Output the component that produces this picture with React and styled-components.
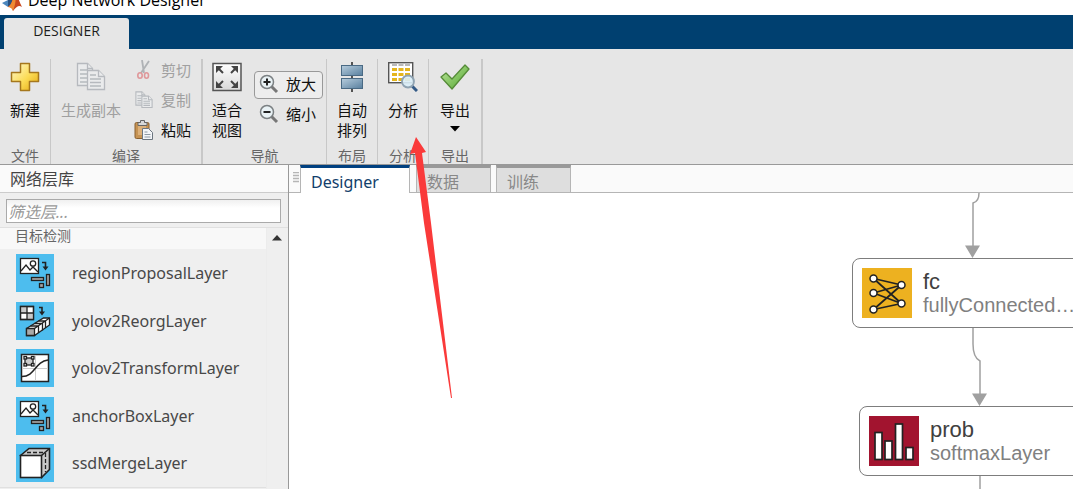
import React from "react";
import styled, { createGlobalStyle } from "styled-components";

const GlobalStyle = createGlobalStyle`
  *, *::before, *::after { box-sizing: border-box; }
  html, body, #root { height: 100%; }
  body {
    margin: 0;
    overflow: hidden;
    background: #fff;
    font-family: "Noto Sans", "Noto Sans CJK SC", sans-serif;
  }
  button, input { font: inherit; margin: 0; }
`;

const Window = styled.div`
  position: relative;
  display: flex;
  flex-direction: column;
  height: 100%;
  overflow: hidden;
`;

const TitleBar = styled.header`
  display: flex;
  align-items: flex-end;
  gap: 6px;
  height: 15px;
  padding: 0 2px 4px;
  flex: none;
  overflow: hidden;
  font-family: "Open Sans", sans-serif;
  font-size: 16px;
  line-height: 22px;
  color: #000;
`;

const TabStrip = styled.nav`
  display: flex;
  align-items: flex-end;
  height: 34px;
  padding-left: 4px;
  flex: none;
  background: #004070;
`;

const RibbonTab = styled.button`
  width: 125px;
  height: 31px;
  border: 0;
  border-radius: 3px 3px 0 0;
  padding: 0 0 6px;
  background: #e6e6e6;
  color: #1c1c1c;
  font-family: "Open Sans", sans-serif;
  font-size: 14px;
`;

const Ribbon = styled.div`
  display: flex;
  height: 116px;
  flex: none;
  padding-top: 10px;
  background: #e6e6e6;
  border-bottom: 1px solid #999;
`;

const Group = styled.section`
  display: flex;
  flex-direction: column;
  width: ${(p) => p.$width}px;
  border-right: ${(p) => (p.$end ? 2 : 1)}px solid #c8c8c8;
`;

const GroupTools = styled.div`
  display: flex;
  justify-content: center;
  align-items: flex-start;
  gap: ${(p) => p.$gap || 0}px;
  height: 89px;
  padding-left: ${(p) => p.$inset || 0}px;
`;

const GroupName = styled.div`
  font-size: 14px;
  line-height: 16px;
  text-align: center;
  color: #666;
`;

const BigTool = styled.button`
  display: flex;
  flex-direction: column;
  align-items: center;
  flex: none;
  border: 0;
  padding: 3px 0 0;
  background: none;
  font-size: 15px;
  line-height: 20px;
  color: #111;
  &:disabled { color: #a0a0a0; }
  & > svg:first-child { margin-bottom: 8px; }
  & > svg:last-child { margin-top: 6px; }
`;

const SmallTools = styled.div`
  display: flex;
  flex-direction: column;
  flex: none;
  margin-top: ${(p) => p.$top}px;
`;

const SmallTool = styled.button`
  display: flex;
  align-items: center;
  gap: 8px;
  height: 30px;
  border: 0;
  padding: 0 0 1px;
  background: none;
  font-size: 15px;
  line-height: 20px;
  color: #111;
  &:disabled { color: #a0a0a0; }
`;

const ZoomTool = styled(SmallTool)`
  gap: 7px;
  height: 28px;
  margin-bottom: 2px;
  border: 1px solid ${(p) => (p.$active ? "#999" : "transparent")};
  border-radius: 4px;
  padding: 0 6px 2px 4px;
  background: ${(p) => (p.$active ? "#ededed" : "none")};
`;

const IconSlot = styled.span`
  display: flex;
  justify-content: center;
  width: 19px;
`;

const Body = styled.main`
  display: flex;
  flex: 1;
  min-height: 0;
`;

const Library = styled.aside`
  display: flex;
  flex-direction: column;
  width: 289px;
  flex: none;
  border-right: 1px solid #999;
  background: #efefef;
`;

const LibraryTitle = styled.h2`
  margin: 0;
  height: 28px;
  padding: 1px 0 0 10px;
  border-bottom: 1px solid #ccc;
  background: #fafafa;
  font-size: 16px;
  font-weight: 400;
  line-height: 26px;
  color: #444;
`;

const SearchRow = styled.div`
  height: 35px;
  padding: 6px 7px 0 6px;
  border-bottom: 1px solid #e0e0e0;
`;

const Search = styled.input`
  display: block;
  width: 100%;
  height: 24px;
  border: 1px solid #aaa;
  padding: 1px 1px 0;
  background: linear-gradient(#f0f0f0, #fff 8px);
  font-size: 16px;
  font-style: italic;
  &::placeholder { color: #999; opacity: 1; }
`;

const LibraryScroll = styled.div`
  display: flex;
  flex: 1;
`;

const LibraryContent = styled.div`
  flex: 1;
  border-right: 1px solid #ececec;
`;

const ScrollTrack = styled.div`
  width: 21px;
  padding: 7px 0 0 5px;
  svg { display: block; }
`;

const Category = styled.h3`
  margin: 0;
  height: 21px;
  padding-left: 15px;
  background: #f8f8f8;
  font-size: 14px;
  font-weight: 400;
  line-height: 16px;
  color: #666;
`;

const LayerList = styled.ul`
  display: flex;
  flex-direction: column;
  justify-content: space-between;
  height: 239px;
  margin: 0;
  padding: 5px 0 5px 16px;
  border-bottom: 1px solid #e0e0e0;
  list-style: none;
`;

const LayerItem = styled.li`
  display: flex;
  align-items: center;
  gap: 18px;
  font-size: 16px;
  line-height: 22px;
  color: #484848;
`;

const Workspace = styled.section`
  display: flex;
  flex-direction: column;
  flex: 1;
  min-width: 0;
`;

const DocTabs = styled.div`
  display: flex;
  height: 28px;
  flex: none;
  background: #fafafa;
`;

const Filler = styled.div`
  width: ${(p) => (p.$width ? `${p.$width}px` : "auto")};
  flex: ${(p) => (p.$width ? "none" : 1)};
  padding: 7px 0 0 4px;
  border-bottom: 1px solid #b5b5b5;
  svg { display: block; }
`;

const DocTab = styled.button`
  width: ${(p) => (p.$active ? 110 : 75)}px;
  border: 1px solid #b5b5b5;
  border-top: 3px solid ${(p) => (p.$active ? "#004080" : "#999")};
  border-bottom-width: ${(p) => (p.$active ? 0 : 1)}px;
  padding: 3px 0 0 10px;
  background: ${(p) => (p.$active ? "#fff" : "#dedede")};
  color: ${(p) => (p.$active ? "#123e6b" : "#888")};
  font-size: 16px;
  line-height: 20px;
  text-align: left;
`;

const Canvas = styled.div`
  position: relative;
  flex: 1;
  overflow: hidden;
  background: #fff;
`;

const Links = styled.svg`
  position: absolute;
  left: 0;
  top: 0;
`;

const Node = styled.article`
  position: absolute;
  left: ${(p) => p.$x}px;
  top: ${(p) => p.$y}px;
  display: flex;
  align-items: center;
  gap: 11px;
  width: 242px;
  height: 70px;
  padding: 0 9px;
  border: 1px solid #7d7d7d;
  border-radius: 8px;
  background: #fff;
  font-family: "Liberation Sans", sans-serif;
  white-space: nowrap;
  svg { flex: none; }
`;

const NodeName = styled.div`
  font-size: 22px;
  line-height: 24px;
  color: #404040;
`;

const NodeType = styled.div`
  font-size: 20px;
  line-height: 22px;
  color: #808080;
`;

const Pointer = styled.svg`
  position: absolute;
  left: 409px;
  top: 136px;
  pointer-events: none;
`;

const Logo = () => (
  <svg width="20" height="18" viewBox="0 0 20 18">
    <path d="M0 10 6 7 10 11 6 14Z" fill="#4b86bd" />
    <path d="M6 7C9 6 10 1 13 0L10 12 6 14Z" fill="#29517f" />
    <path d="M13 0c3 2 4 9 7 14-3-2-5-1-9 4-1-3-2-4-5-4 4-2 5-10 7-14Z" fill="#c9471e" />
    <path d="M13 0c1 5 1 10-2 18-1-3-2-4-5-4 4-2 5-10 7-14Z" fill="#ef8a32" />
  </svg>
);

const PlusIcon = () => (
  <svg width="30" height="30" viewBox="0 0 30 30">
    <defs>
      <linearGradient id="gold" x1="0" y1="0" x2="1" y2="1">
        <stop offset="0" stopColor="#fff9cf" />
        <stop offset="0.55" stopColor="#fbdb55" />
        <stop offset="1" stopColor="#e2a60c" />
      </linearGradient>
    </defs>
    <path d="M10.500 1.500h9v9h9v9h-9v9h-9v-9h-9v-9h9Z" fill="url(#gold)" stroke="#a5771d" strokeWidth="1.500" strokeLinejoin="round" />
  </svg>
);

const CopyPages = ({ size = 30 }) => (
  <svg width={size} height={size} viewBox="0 0 30 30" opacity="0.55">
    <g fill="#eef0f2" stroke="#8f969e" strokeWidth={size < 30 ? 1.8 : 1.3}>
      <path d="M1.500 1.500h10l5 5v17h-15Z" />
      <path d="M11.500 1.500v5h5M4 8h8M4 12h7M4 16h7M4 20h7" />
      <path d="M11.500 8.500h11l6 6v13h-17Z" />
      <path d="M22.500 8.500v6h6M14 13h6M14 17h11M14 20.500h11M14 24h11" />
    </g>
  </svg>
);

const ScissorsIcon = () => (
  <svg width="17" height="20" viewBox="0 0 17 20" fill="none" opacity="0.6">
    <path d="M7 0 9 13M14 1 6 13" stroke="#8b9096" strokeWidth="1.800" />
    <ellipse cx="5" cy="15.500" rx="2.200" ry="2.800" stroke="#dc6468" strokeWidth="1.600" />
    <ellipse cx="11.500" cy="15.500" rx="2" ry="2.800" stroke="#dc6468" strokeWidth="1.600" />
  </svg>
);

const PasteIcon = () => (
  <svg width="19" height="20" viewBox="0 0 19 20">
    <rect x="1" y="2.500" width="14" height="16" rx="1.500" fill="#c69353" stroke="#8a6030" />
    <rect x="4" y="4" width="8" height="11" fill="#dcb079" />
    <path d="M4 2.500h2.500V.5h4v2h2.500v3H4Z" fill="#d8d8d8" stroke="#666" />
    <path d="M8.500 8.500h6l4 4v7h-10Z" fill="#f3f5f8" stroke="#6c7680" />
    <path d="M10.500 12h3M10.500 14.500h6M10.500 17h6" stroke="#8d98a3" />
  </svg>
);

const FitIcon = () => (
  <svg width="30" height="30" viewBox="0 0 30 30">
    <defs>
      <linearGradient id="silver" x1="0" y1="0" x2="0" y2="1">
        <stop offset="0" stopColor="#fff" />
        <stop offset="1" stopColor="#d8d8d8" />
      </linearGradient>
    </defs>
    <rect x="1" y="1.500" width="28" height="27" fill="url(#silver)" stroke="#555" strokeWidth="1.500" />
    <g fill="#444" stroke="#444" strokeWidth="2">
      <path d="m6 6 5 5M24 6l-5 5M6 24l5-5M24 24l-5-5" />
      <path d="M4 4h7l-7 7ZM26 4h-7l7 7ZM4 26h7l-7-7ZM26 26h-7l7-7Z" stroke="none" />
    </g>
  </svg>
);

const ZoomIcon = ({ plus }) => (
  <svg width="20" height="20" viewBox="0 0 20 20">
    <path d="m12 12 6 6" stroke="#777" strokeWidth="3" />
    <circle cx="8" cy="8" r="6.500" fill="#e9f2f5" stroke="#7b8083" strokeWidth="1.500" />
    <path d={plus ? "M4.500 8h7M8 4.500v7" : "M4.500 8h7"} stroke="#222" strokeWidth="2" />
  </svg>
);

const ArrangeIcon = () => (
  <svg width="24" height="30" viewBox="0 0 24 30">
    <defs>
      <linearGradient id="steel" x1="0" y1="0" x2="1" y2="1">
        <stop offset="0" stopColor="#b7cddd" />
        <stop offset="1" stopColor="#587f9e" />
      </linearGradient>
    </defs>
    <path d="M12 0v30" stroke="#222" strokeWidth="1.500" />
    <rect x="1.500" y="3.500" width="21" height="10" fill="url(#steel)" stroke="#4a6a84" />
    <rect x="1.500" y="16.500" width="21" height="10" fill="url(#steel)" stroke="#4a6a84" />
  </svg>
);

const AnalyzeIcon = () => (
  <svg width="30" height="30" viewBox="0 0 30 30">
    <rect x="0.700" y="0.700" width="24" height="20" fill="#fff" stroke="#555" strokeWidth="1.400" />
    {[2, 6, 11, 16].map((y, row) =>
      [4, 10.500, 17].map((x) => (
        <rect key={`${x}-${y}`} x={x} y={y} width="5" height={row === 0 ? 2 : 3} fill={row === 0 ? "#b8b8b8" : "#e4b51e"} />
      ))
    )}
    <path d="m24 24 5 5" stroke="#345b87" strokeWidth="3" />
    <circle cx="20" cy="19.500" r="6" fill="#d9edf7" fillOpacity="0.900" stroke="#8fa3b2" strokeWidth="1.800" />
  </svg>
);

const CheckIcon = () => (
  <svg width="30" height="30" viewBox="0 0 30 30">
    <defs>
      <linearGradient id="leaf" x1="0" y1="0" x2="1" y2="1">
        <stop offset="0" stopColor="#c2e8a1" />
        <stop offset="1" stopColor="#4ea52b" />
      </linearGradient>
    </defs>
    <path d="m1 15 5-4 6 6L25 3l4 4-17 20Z" fill="url(#leaf)" stroke="#558b38" strokeWidth="1.300" strokeLinejoin="round" />
  </svg>
);

const Caret = ({ up }) => (
  <svg width="10" height="6" viewBox="0 0 10 6">
    <path d={up ? "M0 5.500h10L5 0Z" : "M0 0h10L5 5.500Z"} fill={up ? "#333" : "#000"} />
  </svg>
);

const Grip = () => (
  <svg width="6" height="12" viewBox="0 0 6 12">
    <path d="M0 .5h6M0 3.500h6M0 6.500h6M0 9.500h6" stroke="#b5b5b5" strokeWidth="1.500" />
  </svg>
);

const Tile = ({ children }) => (
  <svg width="38" height="38" viewBox="0 0 38 38">
    <rect width="38" height="38" fill="#4dbdee" />
    <g fill="none" stroke="#222" strokeWidth="1.300">{children}</g>
  </svg>
);

const RegionIcon = () => (
  <Tile>
    <rect x="4.500" y="4.500" width="18" height="15" fill="#fff" />
    <path d="m5 17 5-6 4 5 3-3 5 5" />
    <circle cx="17" cy="9.500" r="2.700" />
    <path d="M26 8.500h3.500V14" strokeWidth="1.600" />
    <path d="M26.500 12.500h6l-3 4Z" fill="#222" stroke="none" />
    <g fill="#a5a5a5">
      <rect x="15.500" y="23.500" width="12" height="3" />
      <rect x="30.500" y="20.500" width="3" height="11" />
      <rect x="23.500" y="29.500" width="4" height="4" />
    </g>
  </Tile>
);

const ReorgIcon = () => (
  <Tile>
    <rect x="4.500" y="4.500" width="13" height="13" fill="#fff" />
    <path d="M5 5h6v6H5ZM11 11h6v6h-6Z" fill="#c9c9c9" stroke="none" />
    <path d="M4.500 11h13M11 4.500v13M4.500 4.500h13v13h-13Z" />
    <path d="M23 5.500h3V11" strokeWidth="1.600" />
    <path d="M23 9.500h6l-3 4Z" fill="#222" stroke="none" />
    <path d="m10.500 26.500 17-10.500h6v7l-15 10.500h-8Z" fill="#fff" />
    <path d="M10.500 26.500h8v7h-8Z" fill="#aaa" />
    <path d="m18.500 26.500 15-10.500M14.500 24h8v7M18.500 21.500h8v7M22.500 19h7v7" />
  </Tile>
);

const TransformIcon = () => (
  <Tile>
    <rect x="5.500" y="5.500" width="27" height="27" fill="#fff" strokeWidth="1.500" />
    <path d="M19.500 6v26M6 19.500h26" stroke="#ccc" strokeWidth="1" />
    <path d="M6 27.500c13 0 13-15 26-16.500" strokeWidth="1.500" />
    <rect x="9" y="9" width="8" height="7" fill="#ccc" />
    <g fill="#fff">
      <rect x="8" y="7.500" width="2.500" height="2.500" />
      <rect x="15.500" y="7.500" width="2.500" height="2.500" />
      <rect x="8" y="14.500" width="2.500" height="2.500" />
      <rect x="15.500" y="14.500" width="2.500" height="2.500" />
    </g>
  </Tile>
);

const MergeIcon = () => (
  <Tile>
    <path d="M4.500 11.500 13 4.500h20.500v21l-8 8Z" fill="#c9c9c9" strokeWidth="1.600" />
    <rect x="4.500" y="11.500" width="21" height="22" fill="#fff" strokeWidth="1.600" />
    <path d="m25.500 11.500 8-7" strokeWidth="1.600" />
    <path d="M11 8.500h17M29.500 9v19" strokeDasharray="4 2" />
  </Tile>
);

const FullyConnectedIcon = () => (
  <svg width="50" height="50" viewBox="0 0 50 50">
    <rect width="50" height="50" fill="#edb120" />
    <path d="M11.500 10.500 39.500 17M11.500 10.500 39.500 35.500M11.500 25 39.500 17M11.500 25 39.500 35.500M11.500 41.500 39.500 17M11.500 41.500 39.500 35.500" stroke="#222" strokeWidth="1.700" />
    <g fill="#fff" stroke="#222" strokeWidth="1.500">
      <circle cx="11.500" cy="10.500" r="3.500" />
      <circle cx="11.500" cy="25" r="3.500" />
      <circle cx="11.500" cy="41.500" r="3.500" />
      <circle cx="39.500" cy="17" r="3.500" />
      <circle cx="39.500" cy="35.500" r="3.500" />
    </g>
  </svg>
);

const SoftmaxIcon = () => (
  <svg width="50" height="50" viewBox="0 0 50 50">
    <rect width="50" height="50" fill="#a2142f" />
    <g fill="#fff" stroke="#222" strokeWidth="1.700">
      <rect x="6" y="16.500" width="7" height="27" />
      <rect x="16" y="25" width="7" height="18.500" />
      <rect x="26.500" y="8" width="7" height="35.500" />
      <rect x="37" y="31.500" width="7" height="12" />
    </g>
  </svg>
);

const layers = [
  ["regionProposalLayer", RegionIcon],
  ["yolov2ReorgLayer", ReorgIcon],
  ["yolov2TransformLayer", TransformIcon],
  ["anchorBoxLayer", RegionIcon],
  ["ssdMergeLayer", MergeIcon],
];

const nodes = [
  { x: 563, y: 65, name: "fc", type: "fullyConnected…", Icon: FullyConnectedIcon },
  { x: 570, y: 213, name: "prob", type: "softmaxLayer", Icon: SoftmaxIcon },
];

export default function App() {
  return (
    <Window>
      <GlobalStyle />
      <TitleBar><Logo /><span>Deep Network Designer</span></TitleBar>
      <TabStrip><RibbonTab>DESIGNER</RibbonTab></TabStrip>
      <Ribbon>
        <Group $width={51}>
          <GroupTools><BigTool><PlusIcon /><span>新建</span></BigTool></GroupTools>
          <GroupName>文件</GroupName>
        </Group>
        <Group $width={152} $end>
          <GroupTools $gap={13}>
            <BigTool disabled><CopyPages /><span>生成副本</span></BigTool>
            <SmallTools $top={-4}>
              <SmallTool disabled><IconSlot><ScissorsIcon /></IconSlot>剪切</SmallTool>
              <SmallTool disabled><IconSlot><CopyPages size={18} /></IconSlot>复制</SmallTool>
              <SmallTool><IconSlot><PasteIcon /></IconSlot>粘贴</SmallTool>
            </SmallTools>
          </GroupTools>
          <GroupName>编译</GroupName>
        </Group>
        <Group $width={124}>
          <GroupTools $gap={12} $inset={6}>
            <BigTool><FitIcon /><span>适合<br />视图</span></BigTool>
            <SmallTools $top={12}>
              <ZoomTool $active><ZoomIcon plus />放大</ZoomTool>
              <ZoomTool><ZoomIcon />缩小</ZoomTool>
            </SmallTools>
          </GroupTools>
          <GroupName>导航</GroupName>
        </Group>
        <Group $width={51}>
          <GroupTools><BigTool><ArrangeIcon /><span>自动<br />排列</span></BigTool></GroupTools>
          <GroupName>布局</GroupName>
        </Group>
        <Group $width={51}>
          <GroupTools><BigTool><AnalyzeIcon /><span>分析</span></BigTool></GroupTools>
          <GroupName>分析</GroupName>
        </Group>
        <Group $width={54} $end>
          <GroupTools><BigTool><CheckIcon /><span>导出</span><Caret /></BigTool></GroupTools>
          <GroupName>导出</GroupName>
        </Group>
      </Ribbon>
      <Body>
        <Library>
          <LibraryTitle>网络层库</LibraryTitle>
          <SearchRow><Search placeholder="筛选层..." aria-label="筛选层" /></SearchRow>
          <LibraryScroll>
            <LibraryContent>
              <Category>目标检测</Category>
              <LayerList>
                {layers.map(([name, Icon]) => (
                  <LayerItem key={name}><Icon />{name}</LayerItem>
                ))}
              </LayerList>
            </LibraryContent>
            <ScrollTrack><Caret up /></ScrollTrack>
          </LibraryScroll>
        </Library>
        <Workspace>
          <DocTabs>
            <Filler $width={11}><Grip /></Filler>
            <DocTab $active>Designer</DocTab>
            <Filler $width={6} />
            <DocTab>数据</DocTab>
            <Filler $width={5} />
            <DocTab>训练</DocTab>
            <Filler />
          </DocTabs>
          <Canvas>
            <Links width="784" height="300" viewBox="0 0 784 300" fill="none" stroke="#a0a0a0" strokeWidth="1.500">
              <path d="M690 0c0 5-2 9-6 10v46M684 135v16c0 9 3 15 7 17v36M691 283v17" />
              <path d="M676 52.500h15L683.500 65ZM683 200.500h15L690.500 213Z" fill="#a0a0a0" stroke="none" />
            </Links>
            {nodes.map(({ x, y, name, type, Icon }) => (
              <Node key={name} $x={x} $y={y}>
                <Icon />
                <div><NodeName>{name}</NodeName><NodeType>{type}</NodeType></div>
              </Node>
            ))}
          </Canvas>
        </Workspace>
      </Body>
      <Pointer width="44" height="263" viewBox="0 0 44 263">
        <path d="M7 1 1 18l5-1 9 70 27 175h1L22 87 13 17l4-1Z" fill="#fa3a3a" />
      </Pointer>
    </Window>
  );
}
